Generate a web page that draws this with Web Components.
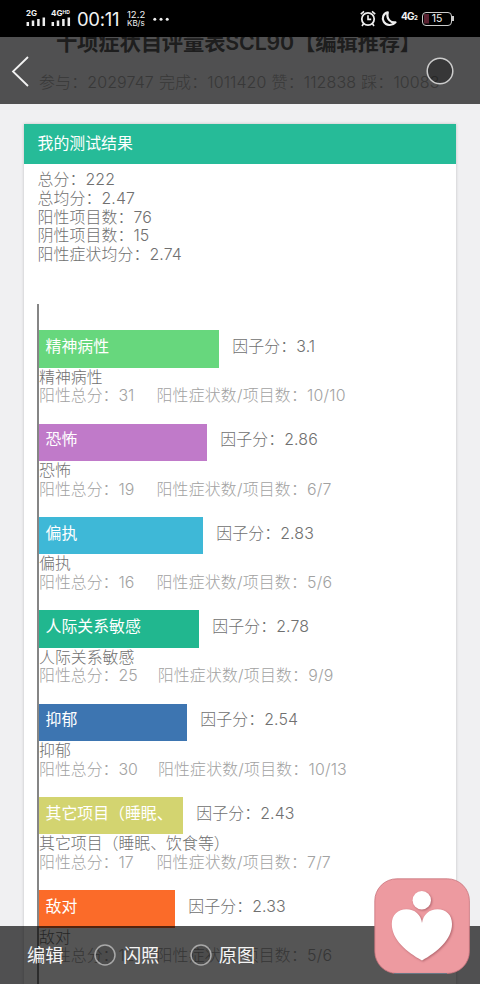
<!DOCTYPE html>
<html lang="zh-CN">
<head>
<meta charset="utf-8">
<meta name="viewport" content="width=device-width, initial-scale=1">
<title>SCL90</title>
<style>
  html, body {
    margin: 0;
    height: 984px;
    overflow: hidden;
    background: #f0f0f2;
    font-family: Inter, "Noto Sans CJK SC", sans-serif;
  }
</style>
</head>
<body>
<photo-preview>
  <result-page>
    <result-card heading="我的测试结果">
      <div slot="summary">总分：222</div>
      <div slot="summary">总均分：2.47</div>
      <div slot="summary">阳性项目数：76</div>
      <div slot="summary">阴性项目数：15</div>
      <div slot="summary">阳性症状均分：2.74</div>
      <factor-row name="精神病性" score="3.1" total="31" ratio="10/10" width="180" color="#67d77d"></factor-row>
      <factor-row name="恐怖" score="2.86" total="19" ratio="6/7" width="168" color="#c07ac9"></factor-row>
      <factor-row name="偏执" score="2.83" total="16" ratio="5/6" width="164" color="#3eb8d7"></factor-row>
      <factor-row name="人际关系敏感" score="2.78" total="25" ratio="9/9" width="160" color="#21b78f"></factor-row>
      <factor-row name="抑郁" score="2.54" total="30" ratio="10/13" width="148" color="#3d75b1"></factor-row>
      <factor-row name="其它项目（睡眠、饮食等）" label="其它项目（睡眠、" score="2.43" total="17" ratio="7/7" width="144" color="#d3d470"></factor-row>
      <factor-row name="敌对" score="2.33" total="12" ratio="5/6" width="136" color="#fb6b29"></factor-row>
    </result-card>
  </result-page>
  <status-bar slot="top"></status-bar>
  <preview-header slot="top"></preview-header>
  <preview-footer slot="bottom">
    <span slot="edit">编辑</span>
    <radio-option>闪照</radio-option>
    <radio-option>原图</radio-option>
  </preview-footer>
  <heart-sticker slot="sticker"></heart-sticker>
</photo-preview>

<script>
class PhotoPreview extends HTMLElement {
  constructor() {
    super();
    this.attachShadow({ mode: "open" });
    this.shadowRoot.innerHTML = `
      <style>
        :host { display: block; position: relative; width: 480px; height: 984px; overflow: hidden; }
        .top { position: absolute; top: 0; left: 0; right: 0; }
        .bottom { position: absolute; bottom: 0; left: 0; right: 0; }
        .sticker { position: absolute; left: 374px; top: 878px; }
      </style>
      <slot></slot>
      <div class="top"><slot name="top"></slot></div>
      <div class="bottom"><slot name="bottom"></slot></div>
      <div class="sticker"><slot name="sticker"></slot></div>
    `;
  }
}

class StatusBar extends HTMLElement {
  constructor() {
    super();
    this.attachShadow({ mode: "open" });
    this.shadowRoot.innerHTML = `
      <style>
        :host {
          display: flex;
          box-sizing: border-box;
          height: 37px;
          padding: 9px 26px 0;
          background: #000;
          color: #f2f2f2;
        }
        .signal { width: 20px; margin-right: 5px; font-size: 8px; font-weight: 700; line-height: 8px; white-space: nowrap; }
        .signal sup { font-size: 5px; line-height: 0; vertical-align: 2px; }
        svg { display: block; flex: none; }
        .time { width: 50px; margin-left: 1px; font-size: 18.5px; line-height: 21px; letter-spacing: -0.3px; }
        .speed { width: 26px; font-size: 9.5px; line-height: 9px; padding-top: 1px; }
        .speed div + div { font-size: 8px; }
        .spacer { flex: 1; }
        .net { width: 21px; margin-left: 2px; font-size: 10px; font-weight: 700; line-height: 14px; letter-spacing: -0.7px; }
        .net small { font-size: 6px; }
        .battery {
          position: relative;
          box-sizing: border-box;
          width: 30px;
          height: 14px;
          margin: 3px 2px 0 0;
          border: 1.3px solid #ccc;
          border-radius: 4px;
          font-size: 10.5px;
          line-height: 11.5px;
          text-align: center;
          background: linear-gradient(90deg, #5a2231 5px, transparent 5px) 1px 1px / 26px 9.5px no-repeat;
        }
        .battery::after {
          content: "";
          position: absolute;
          right: -3.2px;
          top: 3px;
          width: 2px;
          height: 5px;
          background: #ccc;
        }
      </style>
      <div class="signal">2G
        <svg width="20" height="9" viewBox="0 0 20 9"><path d="M1.8 5v4M7 3.5V9M12.4 2v7M17.8 .5V9" stroke="#eee" stroke-width="2.5"/></svg>
      </div>
      <div class="signal">4G<sup>HD</sup>
        <svg width="20" height="9" viewBox="0 0 20 9"><path d="M1.8 5v4M7 3.5V9M12.4 2v7M17.8 .5V9" stroke="#eee" stroke-width="2.5"/></svg>
      </div>
      <div class="time">00:11</div>
      <div class="speed"><div>12.2</div><div>KB/s</div></div>
      <svg width="18" height="20" viewBox="0 0 18 20"><g fill="#eee"><circle cx="1.8" cy="10.2" r="1.5"/><circle cx="8" cy="10.2" r="1.5"/><circle cx="14.2" cy="10.2" r="1.5"/></g></svg>
      <div class="spacer"></div>
      <svg width="18" height="20" viewBox="0 0 18 20" fill="none" stroke="#eee" stroke-width="1.8">
        <circle cx="9" cy="10" r="6.2"/>
        <path d="M9 6.2V10.4h3.2M1.8 5.2 5 2.4M16.2 5.2 13 2.4M4.5 14.8 3 17M13.5 14.8 15 17" stroke-width="1.6"/>
      </svg>
      <svg width="22" height="20" viewBox="0 0 22 20" fill="none" stroke="#eee" stroke-width="2.2" stroke-linejoin="round">
        <path d="M10.8 3.4C6.200 4.500 4.600 9 6.800 12.800c2.200 3.800 8.300 4.500 11.700.500-4.800.800-9.400-3.300-7.700-9.900z"/>
      </svg>
      <div class="net">4G<small>2</small></div>
      <div class="battery">15</div>
    `;
  }
}

class PreviewHeader extends HTMLElement {
  constructor() {
    super();
    this.attachShadow({ mode: "open" });
    this.shadowRoot.innerHTML = `
      <style>
        :host {
          display: flex;
          justify-content: space-between;
          align-items: center;
          box-sizing: border-box;
          height: 67px;
          padding: 0 26px 0 11px;
          background: rgba(0, 0, 0, 0.665);
        }
      </style>
      <svg width="20" height="32" viewBox="0 0 20 32" fill="none" stroke="#f2f2f2" stroke-width="1.8"><path d="M17 2 2 16.500 17 31"/></svg>
      <svg width="28" height="28" viewBox="0 0 28 28"><circle cx="14" cy="14" r="12.800" fill="#000" fill-opacity=".3" stroke="#ccc" stroke-width="1.500"/></svg>
    `;
  }
}

class PreviewFooter extends HTMLElement {
  constructor() {
    super();
    this.attachShadow({ mode: "open" });
    this.shadowRoot.innerHTML = `
      <style>
        :host {
          display: flex;
          align-items: center;
          gap: 30.5px;
          box-sizing: border-box;
          height: 58.5px;
          padding: 1px 27px 0;
          background: rgba(0, 0, 0, 0.665);
          color: #f4f4f4;
          font-size: 18.2px;
          line-height: 24px;
        }
      </style>
      <slot name="edit"></slot>
      <slot></slot>
    `;
  }
}

class RadioOption extends HTMLElement {
  constructor() {
    super();
    this.attachShadow({ mode: "open" });
    this.shadowRoot.innerHTML = `
      <style>
        :host { display: flex; align-items: center; gap: 7px; }
        svg { display: block; }
      </style>
      <svg width="22" height="22" viewBox="0 0 22 22"><circle cx="11" cy="11" r="10" fill="#000" fill-opacity=".1" stroke="#a8a8a8" stroke-width="1.500"/></svg>
      <slot></slot>
    `;
  }
}

class ResultPage extends HTMLElement {
  constructor() {
    super();
    this.attachShadow({ mode: "open" });
    this.shadowRoot.innerHTML = `
      <style>
        :host { display: block; box-sizing: border-box; height: 984px; padding: 26px 24px 0; background: #f0f0f2; overflow: hidden; }
        h1 { margin: 0; font-size: 21.33px; line-height: 32px; font-weight: 600; text-align: center; color: #5c5c5c; white-space: nowrap; letter-spacing: -0.15px; text-indent: -3px; }
        p { margin: 10px 0 26.5px; padding-left: 15px; font-size: 16px; line-height: 29px; color: #a8a8a8; font-weight: 300; white-space: nowrap; letter-spacing: 0.1px; word-spacing: 0.5px; }
      </style>
      <h1>十项症状自评量表SCL90【编辑推荐】</h1>
      <p>参与：2029747 完成：1011420 赞：112838 踩：10083</p>
      <slot></slot>
    `;
  }
}

class ResultCard extends HTMLElement {
  constructor() {
    super();
    this.attachShadow({ mode: "open" });
    this.shadowRoot.innerHTML = `
      <style>
        :host {
          display: block;
          height: 900px;
          background: #fff;
          box-shadow: 0 0 3px rgba(0, 0, 0, 0.2);
          font-size: 15.9px;
          line-height: 18.667px;
          font-weight: 300;
          color: #707070;
        }
        header { box-sizing: border-box; height: 40px; padding-left: 13.5px; line-height: 40px; background: #26bb98; color: #fff; font-weight: 400; }
        .summary { height: 140px; box-sizing: border-box; padding: 7.8px 13.5px 0; letter-spacing: 0.1px; }
        .chart { height: 700px; margin-left: 13px; padding-top: 26.8px; border-left: 2px solid #858585; }
      </style>
      <header></header>
      <div class="summary"><slot name="summary"></slot></div>
      <div class="chart"><slot></slot></div>
    `;
  }

  connectedCallback() {
    this.shadowRoot.querySelector("header").textContent = this.getAttribute("heading");
  }
}

class FactorRow extends HTMLElement {
  constructor() {
    super();
    this.attachShadow({ mode: "open" });
    this.shadowRoot.innerHTML = `
      <style>
        :host { display: block; height: 93.333px; white-space: nowrap; }
        .line { display: flex; height: 37.333px; }
        .bar { box-sizing: border-box; padding: 7.8px 0 0 6.5px; color: #fff; font-weight: 400; }
        .score { padding: 7.8px 0 0 13.3px; letter-spacing: 0.1px; }
        .name { padding-top: 1px; }
        .detail { display: flex; gap: 20px; color: #a2a2a2; }
        .total { min-width: 97.5px; }
        .ratio { letter-spacing: 0.2px; }
      </style>
      <div class="line"><div class="bar"></div><div class="score"></div></div>
      <div class="name"></div>
      <div class="detail"><span class="total"></span><span class="ratio"></span></div>
    `;
  }

  connectedCallback() {
    const find = (s) => this.shadowRoot.querySelector(s);
    const name = this.getAttribute("name");
    const bar = find(".bar");
    bar.style.width = `${this.getAttribute("width")}px`;
    bar.style.background = this.getAttribute("color");
    bar.textContent = this.getAttribute("label") || name;
    find(".score").textContent = `因子分：${this.getAttribute("score")}`;
    find(".name").textContent = name;
    find(".total").textContent = `阳性总分：${this.getAttribute("total")}`;
    find(".ratio").textContent = `阳性症状数/项目数：${this.getAttribute("ratio")}`;
  }
}

class HeartSticker extends HTMLElement {
  constructor() {
    super();
    this.attachShadow({ mode: "open" });
    this.shadowRoot.innerHTML = `
      <style>
        :host { display: block; width: 96px; height: 96px; }
        svg { display: block; }
        .mark { filter: drop-shadow(1px 1px 1px rgba(120, 50, 60, 0.5)); }
      </style>
      <svg width="96" height="96" viewBox="0 0 96 96">
        <rect x=".8" y=".8" width="94.600" height="94.600" rx="22" fill="#ed9aa0" stroke="#c8747c" stroke-width=".8"/>
        <path d="M20 95.600h53" stroke="#4a7788" stroke-width=".8"/>
        <g class="mark" fill="#fff">
          <circle cx="47.800" cy="22.300" r="9.200"/>
          <path d="M48 45C47 36.500 40.500 31.300 32.500 31.300 24 31.300 17.800 37 17.800 46 17.800 62 33 74 48 82.500 63 74 78 62 78 46 78 37 72 31.300 63.500 31.300 55.500 31.300 49 36.500 48 45z"/>
        </g>
      </svg>
    `;
  }
}

customElements.define("photo-preview", PhotoPreview);
customElements.define("status-bar", StatusBar);
customElements.define("preview-header", PreviewHeader);
customElements.define("preview-footer", PreviewFooter);
customElements.define("radio-option", RadioOption);
customElements.define("result-page", ResultPage);
customElements.define("result-card", ResultCard);
customElements.define("factor-row", FactorRow);
customElements.define("heart-sticker", HeartSticker);
</script>
</body>
</html>
